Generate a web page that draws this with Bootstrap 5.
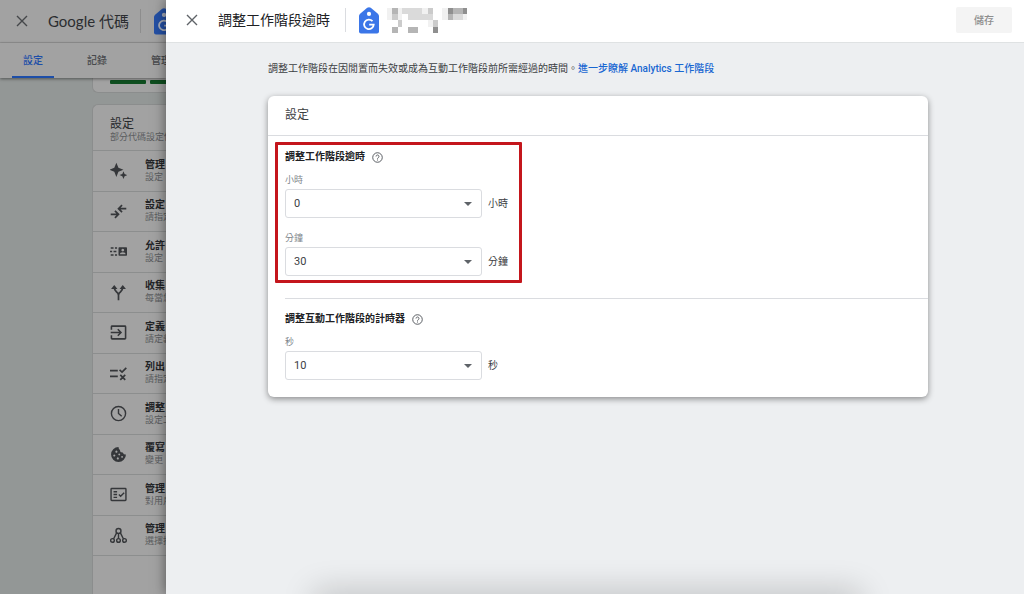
<!DOCTYPE html>
<html lang="zh-Hant">
<head>
<meta charset="utf-8">
<meta name="viewport" content="width=device-width, initial-scale=1">
<title>調整工作階段逾時</title>
<link href="https://cdn.jsdelivr.net/npm/bootstrap@5.3.0/dist/css/bootstrap.min.css" rel="stylesheet">
<style>
body{font-family:Roboto,"Noto Sans CJK TC",sans-serif;font-size:10px;line-height:16px;color:#3c4043;background:#edeff1}
.backdrop-page{width:166px;background:#939796;color:#2b2d30}
.top-bar{height:43px;padding-left:12px}
.backdrop-page .top-bar{background:#a2a2a2;border-bottom:1px solid #929292}
.drawer .top-bar{background:#fff;border-bottom:1px solid #dfe2e3;padding:0 12px 2px 16px}
.close-btn{width:20px;height:20px;color:#5f6368;line-height:0;flex:none}
.backdrop-page .close-btn{color:#45474a}
.brand-title{font-family:Lato,"Noto Sans CJK TC",sans-serif;font-size:15px;line-height:24px;white-space:nowrap;width:92px;flex:none}
.main-title{font-size:14px;line-height:24px;color:#202124;white-space:nowrap;width:127px;margin:0;font-weight:400}
.rule{width:1px;height:24px;background:#dadce0;flex:none;margin-right:13px}
.backdrop-page .rule{background:#8d8d8d}
.tag-logo{width:20px;height:27px;flex:none}
.tab-strip{height:35px;background:#a2a2a2;box-shadow:0 1px 3px rgba(0,0,0,.45);padding-left:12px;gap:22px}
.tab-link{color:#47494c;font-weight:500;text-decoration:none;white-space:nowrap;line-height:36px;width:42px;flex:none;text-align:center}
.tab-link.active{color:#1d4ea8;border-bottom:2px solid #1d4ea8}
.panel-dim{background:#a2a2a2;border:1px solid #8b8d8d;border-right:0;margin-left:92px}
.panel-one{height:15px;border-top:0;border-radius:0 0 0 6px;padding:2px 0 0 17px;gap:4px}
.bar-green{height:4px;width:36px;background:#0f4f20;flex:none;border-radius:1px}
.panel-two{border-radius:6px 0 0 0;margin-top:11px}
.panel-head{padding:12px 0 7px 17px}
.panel-title{font-size:12px;line-height:14px;color:#26282b;margin:0;font-weight:400}
.tiny{display:block;font-size:9px;line-height:12px;color:#5b5d60;white-space:nowrap}
.row-list{height:406px}
.set-row{border-top:1px solid #8c8e8e;text-decoration:none;padding-left:17px;gap:18px}
.set-row:last-child{border-bottom:1px solid #8c8e8e}
.set-row b{display:block;font-size:10px;line-height:12px;white-space:nowrap;color:#222427}
.set-row svg{width:17px;height:17px;flex:none;color:#35373a}
.drawer{background:#edeff1;box-shadow:0 0 12px rgba(0,0,0,.5);z-index:2}
.save-btn,.save-btn:disabled{width:56px;height:26px;background:#f4f4f4;color:#8e8e8e;border-radius:2px;font-size:10px;opacity:1;font-weight:500}
.content-col{padding:18px 96px 0 102px}
.intro-link{color:#1967d2;text-decoration:none;font-weight:500}
.main-panel{border-radius:6px;background:#fff;box-shadow:0 2px 6px rgba(0,0,0,.42);margin-top:19px;padding-bottom:17px}
.main-head{height:40px;border-bottom:1px solid #dadce0;font-size:12px;padding:0 17px;margin:0;font-weight:400}
.timeout-box{border:3px solid #c4161c;width:247px;margin:6px 0 0 7px;padding:4px 7px;border-radius:1px}
.sub-head{font-weight:700;font-size:10px;line-height:16px;color:#202124;gap:7px;margin:0 0 9px}
.sub-head svg{width:11px;height:11px}
.field-label{font-size:9px;line-height:12px;color:#80868b;margin-bottom:3px;display:block}
.field-group + .field-group{margin-top:14px}
.field-group > div{gap:6px}
.pick{appearance:none;width:197px;height:29px;border:1px solid #dadce0;border-radius:3px;font-size:11px;line-height:16px;color:#3c4043;padding:0 8px;background:#fff url("data:image/svg+xml,%3Csvg xmlns='http://www.w3.org/2000/svg' width='8' height='4'%3E%3Cpath d='M0 0h8L4 4z' fill='%235f6368'/%3E%3C/svg%3E") no-repeat right 9px center}
.timer-part{margin:15px 0 0 17px;border-top:1px solid #dadce0;padding-top:12px}
.bottom-shade{left:150px;right:165px;bottom:-20px;height:20px;box-shadow:0 0 32px 2px rgba(0,0,0,.22)}
</style>
</head>
<body>
<svg class="d-none" aria-hidden="true">
  <symbol id="tag" viewBox="0 0 20 27"><path d="M8.200.8Q10-.5 11.800.8L18.600 6.400Q20 7.600 20 9V24.500Q20 26.500 18 26.500H2Q0 26.500 0 24.500V9Q0 7.600 1.400 6.400Z" fill="var(--tag,#3b76e8)"/><circle cx="10" cy="6.900" r="2.100" fill="var(--mark,#fff)"/><path d="M13.500 14.200A4.800 4.800 0 1 0 14.700 17.600H10.200" fill="none" stroke="var(--mark,#fff)" stroke-width="1.800"/></symbol>
  <symbol id="cross" viewBox="0 0 20 20"><path d="M5 5l10 10M15 5L5 15" stroke="currentColor" stroke-width="1.400"/></symbol>
  <symbol id="help" viewBox="0 0 12 12"><circle cx="6" cy="6" r="5.200" fill="none" stroke="#4d5156"/><path d="M4.400 4.900a1.600 1.600 0 1 1 2.500 1.300Q6 6.700 6 7.400" fill="none" stroke="#4d5156"/><path d="M5.500 8.200h1v1h-1z" fill="#4d5156"/></symbol>
</svg>
<div class="d-flex vh-100 overflow-hidden">
<aside class="backdrop-page flex-shrink-0 overflow-hidden">
  <header class="top-bar d-flex align-items-center overflow-hidden">
    <button class="btn p-0 border-0 close-btn me-3" aria-label="關閉"><svg width="20" height="20"><use href="#cross"/></svg></button>
    <span class="brand-title">Google 代碼</span>
    <span class="rule"></span>
    <svg class="tag-logo" style="--tag:#2450a5;--mark:#a8adb8"><use href="#tag"/></svg>
  </header>
  <nav class="tab-strip d-flex position-relative">
    <a href="#" class="tab-link active">設定</a>
    <a href="#" class="tab-link">記錄</a>
    <a href="#" class="tab-link">管理</a>
  </nav>
  <div class="panel-dim panel-one d-flex"><span class="bar-green"></span><span class="bar-green"></span></div>
  <section class="panel-dim panel-two vh-100">
    <div class="panel-head"><h2 class="panel-title">設定</h2><div class="tiny">部分代碼設定僅</div></div>
    <div class="row-list d-flex flex-column">
      <a href="#" class="set-row d-flex align-items-center flex-fill"><svg viewBox="0 0 24 24" fill="currentColor"><path d="M9 1l2.900 7.100L19 11l-7.100 2.900L9 21l-2.900-7.100L-1 11l7.100-2.900zM19 13l1.600 3.900L24.500 18.500l-3.900 1.600L19 24l-1.600-3.900-3.900-1.600 3.900-1.600z"/></svg><span><b>管理</b><span class="tiny">設定「</span></span></a>
      <a href="#" class="set-row d-flex align-items-center flex-fill"><svg viewBox="0 0 24 24" fill="none" stroke="currentColor" stroke-width="2.400"><path d="M1 16h10M7 11l5 5-5 5M23 8H13M17 3l-5 5 5 5"/></svg><span><b>設定</b><span class="tiny">請指定</span></span></a>
      <a href="#" class="set-row d-flex align-items-center flex-fill"><svg viewBox="0 0 24 24"><path d="M1 7h4M7 7h3M-1 12h4M5 12h4M1 17h4M7 17h3" stroke="currentColor" stroke-width="2.200"/><path fill="currentColor" fill-rule="evenodd" d="M13 6h10q1 0 1 1v10q0 1-1 1H13q-1 0-1-1V7q0-1 1-1zM18 8a2 2 0 1 0 .1 0zM14 16h8q0-3-4-3t-4 3z"/></svg><span><b>允許</b><span class="tiny">設定「</span></span></a>
      <a href="#" class="set-row d-flex align-items-center flex-fill"><svg viewBox="0 0 24 24" fill="none" stroke="currentColor" stroke-width="2.400"><path d="M12 23v-7q0-3-3-5T6 4M12 16q0-3 3-5t3-7"/><path fill="currentColor" stroke="none" d="M1.500 7L6 1.500 10.500 7zM13.500 7L18 1.500 22.500 7z"/></svg><span><b>收集</b><span class="tiny">每當您</span></span></a>
      <a href="#" class="set-row d-flex align-items-center flex-fill"><svg viewBox="0 0 24 24" fill="none" stroke="currentColor" stroke-width="2.200"><path d="M2 8V4q0-1 1-1h18q1 0 1 1v16q0 1-1 1H3q-1 0-1-1v-4M1 12h14M11 7.500l4.500 4.500-4.500 4.500"/></svg><span><b>定義</b><span class="tiny">請定義</span></span></a>
      <a href="#" class="set-row d-flex align-items-center flex-fill"><svg viewBox="0 0 24 24" fill="none" stroke="currentColor" stroke-width="2.400"><path d="M0 8h11M0 16h11M13.500 7l3.500 3 6-6M14.500 14l7 7M21.500 14l-7 7"/></svg><span><b>列出</b><span class="tiny">請指定</span></span></a>
      <a href="#" class="set-row d-flex align-items-center flex-fill"><svg viewBox="0 0 24 24" fill="none" stroke="currentColor" stroke-width="2"><circle cx="12" cy="12" r="10"/><path d="M12 5.500V12l4.500 4"/></svg><span><b>調整</b><span class="tiny">設定工</span></span></a>
      <a href="#" class="set-row d-flex align-items-center flex-fill"><svg viewBox="0 0 24 24"><path fill="currentColor" fill-rule="evenodd" d="M12 1.500A10.500 10.500 0 1 0 22.500 12q-3 .5-4.500-3-4 .5-4-3.500-2-1-2-4zM9 6.500a1.500 1.500 0 1 0 .1 0zM6 12a1.500 1.500 0 1 0 .1 0zM13 10.500a1.300 1.300 0 1 0 .1 0zM11 16a1.500 1.500 0 1 0 .1 0zM17 14a1.300 1.300 0 1 0 .1 0z"/></svg><span><b>覆寫</b><span class="tiny">變更「</span></span></a>
      <a href="#" class="set-row d-flex align-items-center flex-fill"><svg viewBox="0 0 24 24" fill="none" stroke="currentColor" stroke-width="2"><rect x="1.500" y="3.500" width="21" height="17" rx="1"/><path d="M5 8h5M5 12h5M5 16h5M12.500 12l2.500 2.500 5-5"/></svg><span><b>管理</b><span class="tiny">對用戶</span></span></a>
      <a href="#" class="set-row d-flex align-items-center flex-fill"><svg viewBox="0 0 24 24" fill="none" stroke="currentColor" stroke-width="2"><circle cx="12" cy="5.500" r="3.500"/><circle cx="3.500" cy="19" r="2.600"/><circle cx="12" cy="19" r="2.600"/><circle cx="20.500" cy="19" r="2.600"/><path d="M12 9v7.500M9.500 8L5 17M14.500 8L19 17"/></svg><span><b>管理</b><span class="tiny">選擇接</span></span></a>
    </div>
  </section>
</aside>
<main class="drawer flex-fill position-relative">
  <header class="top-bar d-flex align-items-center">
    <button class="btn p-0 border-0 close-btn me-3" aria-label="關閉"><svg width="20" height="20"><use href="#cross"/></svg></button>
    <h1 class="main-title">調整工作階段逾時</h1>
    <span class="rule"></span>
    <svg class="tag-logo me-2"><use href="#tag"/></svg>
    <svg width="80" height="26" viewBox="96 15 240 78" shape-rendering="crispEdges" aria-hidden="true">
      <path fill="#f1f1f1" d="M96 18h14v37H96zM129 18h12v37h-12zM200 18h18v19h-18zM262 18h16v37h-16zM325 37h16v18h-16zM218 55h16v20h-16z"/>
      <path fill="#dadada" d="M141 18h59v19h-59zM158 37h76v18h-76zM294 37h31v18h-31z"/>
      <path fill="#cbcbcb" d="M110 37h19v18h-19zM218 18h16v19h-16zM129 55h12v20h-12zM234 55h14v20h-14z"/>
      <path fill="#b5b5b5" d="M110 18h19v19h-19zM294 18h31v19h-31zM278 37h16v18h-16zM110 75h19v17h-19zM158 75h30v17h-30z"/>
      <path fill="#8f8f8f" d="M278 18h16v19h-16zM325 18h16v19h-16zM233 75h15v17h-15z"/>
    </svg>
    <button class="btn border-0 p-0 save-btn ms-auto" disabled>儲存</button>
  </header>
  <div class="content-col">
    <p class="mb-0">調整工作階段在因閒置而失效或成為互動工作階段前所需經過的時間。<a href="#" class="intro-link">進一步瞭解 Analytics 工作階段</a></p>
    <section class="main-panel">
      <h2 class="main-head d-flex align-items-center">設定</h2>
      <div class="timeout-box">
        <h3 class="sub-head d-flex align-items-center">調整工作階段逾時<svg><use href="#help"/></svg></h3>
        <div class="field-group">
          <label class="field-label" for="hours">小時</label>
          <div class="d-flex align-items-center"><select class="pick" id="hours"><option>0</option></select><span>小時</span></div>
        </div>
        <div class="field-group">
          <label class="field-label" for="minutes">分鐘</label>
          <div class="d-flex align-items-center"><select class="pick" id="minutes"><option>30</option></select><span>分鐘</span></div>
        </div>
      </div>
      <div class="timer-part">
        <h3 class="sub-head d-flex align-items-center">調整互動工作階段的計時器<svg><use href="#help"/></svg></h3>
        <div class="field-group">
          <label class="field-label" for="seconds">秒</label>
          <div class="d-flex align-items-center"><select class="pick" id="seconds"><option>10</option></select><span>秒</span></div>
        </div>
      </div>
    </section>
  </div>
  <div class="bottom-shade position-absolute"></div>
</main>
</div>
<script src="https://cdn.jsdelivr.net/npm/bootstrap@5.3.0/dist/js/bootstrap.bundle.min.js"></script>
</body>
</html>
